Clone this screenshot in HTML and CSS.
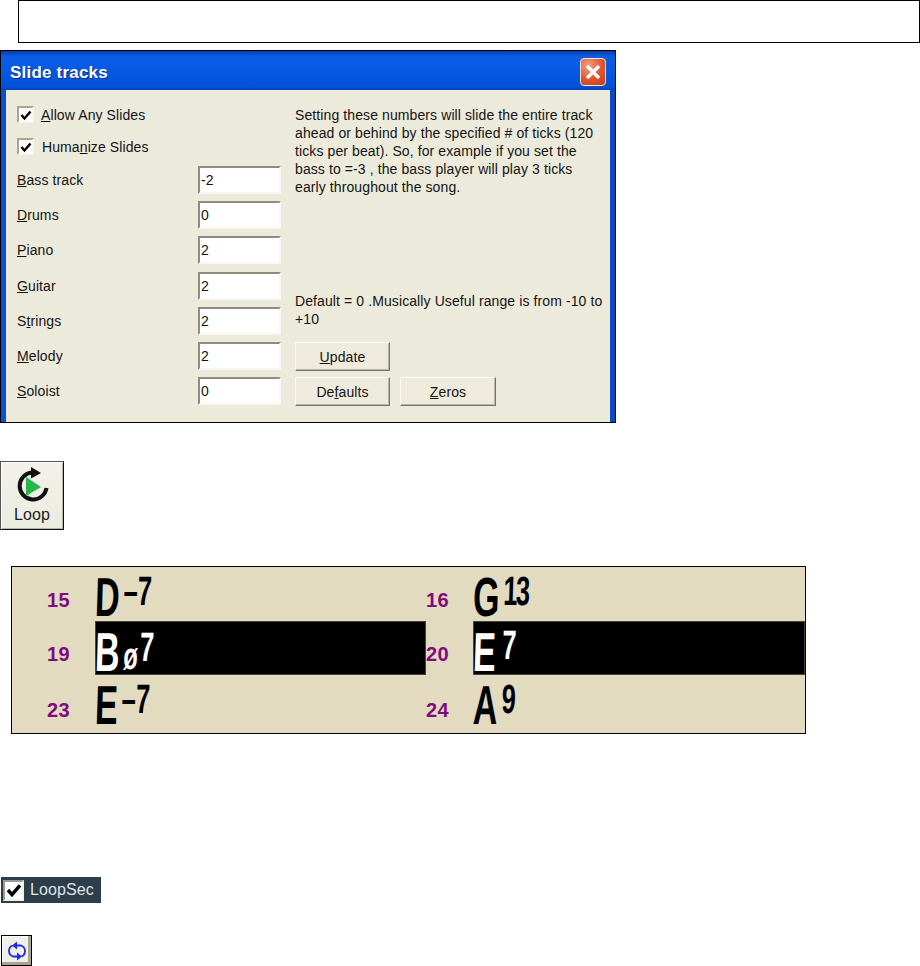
FILE: index.html
```html
<!DOCTYPE html>
<html lang="en">
<head>
<meta charset="utf-8">
<title>Slide tracks</title>
<link rel="stylesheet" href="styles.css">
</head>
<body>
<div class="note-box"></div>

<section class="dialog">
  <header class="titlebar">
    <span class="title">Slide tracks</span>
    <span class="close"><svg width="20" height="20" viewBox="0 0 20 20"><path d="M4 4L16 16M16 4L4 16" stroke="#fff" stroke-width="3.4" fill="none"/></svg></span>
  </header>
  <div class="dialog-body">
    <div class="form">
      <div class="check-row"><span class="check"><svg width="12" height="12" viewBox="0 0 12 12"><path d="M1.5 6L4.5 9.5L10.5 2.5" stroke="#000" stroke-width="2.4" fill="none"/></svg></span><span><u>A</u>llow Any Slides</span></div>
      <div class="check-row second"><span class="check"><svg width="12" height="12" viewBox="0 0 12 12"><path d="M1.5 6L4.5 9.5L10.5 2.5" stroke="#000" stroke-width="2.4" fill="none"/></svg></span><span class="shifted">Huma<u>n</u>ize Slides</span></div>
      <div class="fields">
        <label class="field"><span><u>B</u>ass track</span><input class="num" value="-2"></label>
        <label class="field"><span><u>D</u>rums</span><input class="num" value="0"></label>
        <label class="field"><span><u>P</u>iano</span><input class="num" value="2"></label>
        <label class="field"><span><u>G</u>uitar</span><input class="num" value="2"></label>
        <label class="field"><span>S<u>t</u>rings</span><input class="num" value="2"></label>
        <label class="field"><span><u>M</u>elody</span><input class="num" value="2"></label>
        <label class="field"><span><u>S</u>oloist</span><input class="num" value="0"></label>
      </div>
    </div>
    <div class="side">
      <p>Setting these numbers will slide the entire track ahead or behind by the specified # of ticks (120 ticks per beat). So, for example if you set the bass to =-3 , the bass player will play 3 ticks early throughout the song.</p>
      <p class="range">Default = 0 .Musically Useful range is from -10 to +10</p>
      <div class="btn-row"><span class="btn"><u>U</u>pdate</span></div>
      <div class="btn-row"><span class="btn">De<u>f</u>aults</span><span class="btn"><u>Z</u>eros</span></div>
    </div>
  </div>
</section>

<div class="loop-btn">
  <svg width="38" height="38" viewBox="0 0 38 38"><path d="M19 5.500A13.500 13.500 0 1 0 33.500 21" fill="none" stroke="#111" stroke-width="4"/><path d="M18 0L28 6L18 11.500Z" fill="#111"/><path d="M13 10L28 20L13 29Z" fill="#22b84a"/></svg>
  <span>Loop</span>
</div>

<div class="chart">
  <span class="bar-no">15</span><div class="cell"><span class="chord"><span class="root">D</span><span class="ext">–7</span></span></div>
  <span class="bar-no">16</span><div class="cell"><span class="chord"><span class="root">G</span><span class="ext tight">13</span></span></div>
  <span class="bar-no">19</span><div class="cell hot"><span class="chord"><span class="root">B</span><span class="low">ø</span><span class="ext close-up">7</span></span></div>
  <span class="bar-no">20</span><div class="cell hot"><span class="chord"><span class="root">E</span><span class="ext wide">7</span></span></div>
  <span class="bar-no">23</span><div class="cell"><span class="chord"><span class="root">E</span><span class="ext">–7</span></span></div>
  <span class="bar-no">24</span><div class="cell"><span class="chord"><span class="root">A</span><span class="ext">9</span></span></div>
</div>

<div class="loopsec">
  <span class="sec-check"><svg width="16" height="16" viewBox="0 0 12 12"><path d="M1.500 6L4.500 9.500L10.500 2.500" stroke="#000" stroke-width="2.600" fill="none"/></svg></span>
  <span>LoopSec</span>
</div>

<div class="mini-btn">
  <svg width="22" height="22" viewBox="0 0 22 22"><path d="M8 5.500H15Q19 7 19 11T15.500 16.500" fill="none" stroke="#1a2cf0" stroke-width="1.800"/><path d="M14 16.500H7Q3 15 3 11T6.500 5.500" fill="none" stroke="#1a2cf0" stroke-width="1.800"/><path d="M11 1.500V9.500L6 5.500Z M11 12.500V20.500L16 16.500Z" fill="#1a2cf0"/></svg>
</div>
</body>
</html>
```

FILE: styles.css
```css
html, body {
  margin: 0;
  padding: 0;
  background: #fff;
  height: 966px;
  overflow: hidden;
}
body {
  font-family: "Liberation Sans", Arial, sans-serif;
  font-size: 14px;
  letter-spacing: 0.1px;
  color: #141414;
}
.note-box {
  box-sizing: border-box;
  width: 902px;
  height: 43px;
  margin-left: 18px;
  border: 1px solid #000;
}
.dialog {
  box-sizing: border-box;
  width: 616px;
  height: 373px;
  margin: 7px 0 0 0;
  border: 1px solid #000;
  background: #eceadb;
  display: flex;
  flex-direction: column;
}
.titlebar {
  flex: none;
  height: 39px;
  display: flex;
  align-items: center;
  justify-content: space-between;
  padding: 0 9px 0 9px;
  background: linear-gradient(#0a3aa8, #0c5ce4 14%, #0a5ce6 30%, #0455dc 70%, #0452d8 90%, #0040c0);
}
.title {
  color: #fff;
  font-weight: 700;
  font-size: 17px;
  letter-spacing: 0.2px;
  margin-top: 5px;
  text-shadow: 1px 1px 0 #0a2f8c;
}
.close {
  box-sizing: border-box;
  width: 26px;
  height: 28px;
  margin-top: 3px;
  display: flex;
  align-items: center;
  justify-content: center;
  border: 1px solid #f2e6e0;
  border-radius: 4px;
  background: radial-gradient(circle at 30% 25%, #f0a080, #e0552c 55%, #c23a18);
}
.dialog-body {
  flex: 1;
  display: flex;
  padding: 16px 0 0 11px;
  border-left: 5px solid #0a50d8;
  border-right: 5px solid #0a48c8;
  background: #eceadb;
}
.form {
  width: 278px;
  flex: none;
}
.check-row {
  display: flex;
  align-items: center;
  height: 17px;
  gap: 7px;
}
.check-row.second {
  margin-top: 15px;
}
.shifted {
  margin-left: 1px;
}
.check {
  box-sizing: border-box;
  width: 17px;
  height: 17px;
  display: flex;
  align-items: center;
  justify-content: center;
  background: #fff;
  border: 2px solid;
  border-color: #a8a596 #f6f5ee #f6f5ee #a8a596;
}
.fields {
  margin-top: 11px;
  display: flex;
  flex-direction: column;
  gap: 7.2px;
}
.field {
  display: flex;
  align-items: center;
  height: 28px;
}
.field > span {
  width: 181px;
  flex: none;
}
.num {
  box-sizing: border-box;
  width: 83px;
  height: 28px;
  padding: 0 0 0 1px;
  margin: 0;
  font: inherit;
  color: #141414;
  background: #fff;
  border: 2px solid;
  border-color: #8f8c7e #f8f7f1 #f8f7f1 #8f8c7e;
  border-radius: 0;
  outline: none;
}
.side {
  width: 310px;
  flex: none;
  height: 300px;
  display: flex;
  flex-direction: column;
}
.side p {
  margin: 0;
  line-height: 18px;
}
.side .range {
  margin-top: auto;
}
.btn-row {
  display: flex;
  gap: 10px;
  margin-top: 6px;
}
.range + .btn-row {
  margin-top: 14px;
}
.btn {
  box-sizing: border-box;
  width: 95px;
  height: 29px;
  display: flex;
  align-items: center;
  justify-content: center;
  background: #eeebdc;
  border: 1px solid;
  border-color: #fbfaf4 #77756a #77756a #fbfaf4;
  box-shadow: inset -1px -1px 0 #b8b5a6;
}
.btn + .btn {
  width: 96px;
}
.loop-btn {
  box-sizing: border-box;
  width: 64px;
  height: 69px;
  margin-top: 38px;
  display: flex;
  flex-direction: column;
  align-items: center;
  background: linear-gradient(#f3f2ea, #ecebe0);
  border: 1px solid #111;
  border-color: #555 #111 #111 #555;
  padding-top: 5px;
  box-shadow: inset 1px 1px 0 #fff, inset -1px -1px 0 #b5b3a6;
}
.loop-btn svg {
  display: block;
}
.loop-btn span {
  font-size: 16px;
  line-height: 18px;
  margin-top: 1px;
  color: #1c1c1c;
}
.chart {
  box-sizing: border-box;
  width: 795px;
  height: 168px;
  margin: 36px 0 0 11px;
  display: grid;
  grid-template-columns: 83px 331px 47px 1fr;
  grid-template-rows: 54px 54px 58px;
  background: #e2dbc0;
  border: 1px solid #000;
}
.bar-no {
  align-self: center;
  font-size: 20px;
  font-weight: 700;
  letter-spacing: 0.5px;
  color: #800a80;
  padding-left: 35px;
  padding-top: 12px;
  line-height: 20px;
}
.bar-no:nth-of-type(even) {
  padding-left: 0;
}
.cell {
  min-width: 0;
  padding-top: 3px;
  color: #000;
}
.cell.hot {
  padding-top: 4px;
  background: #000;
  color: #fff;
  box-shadow: inset 0 0 0 1px #4a4636;
}
.chord {
  display: inline-flex;
  align-items: flex-start;
  font-weight: 700;
  letter-spacing: 0;
  transform: scaleX(0.62) skewX(-3deg);
  transform-origin: left top;
  margin-left: 1px;
}
.root {
  font-size: 55px;
  line-height: 55px;
}
.ext {
  font-size: 41px;
  line-height: 41px;
  margin-left: 6px;
  margin-top: 1px;
}
.ext.tight {
  letter-spacing: -3px;
  margin-left: 6px;
}
.ext.wide {
  margin-left: 10px;
  margin-top: 0;
}
.ext.close-up {
  margin-left: 3px;
  margin-top: 2px;
}
.low {
  font-size: 38px;
  line-height: 38px;
  margin-left: 6px;
  margin-top: 12px;
}
.loopsec {
  box-sizing: border-box;
  width: 100px;
  height: 26px;
  margin: 143px 0 0 1px;
  padding-left: 2px;
  display: flex;
  align-items: center;
  gap: 6px;
  background: #2b3e4a;
  color: #dfe5e8;
  font-size: 16px;
}
.sec-check {
  box-sizing: border-box;
  width: 21px;
  height: 21px;
  display: flex;
  align-items: center;
  justify-content: center;
  background: #fff;
  border: 2px solid;
  border-color: #9c9a8c #f2f1e8 #f2f1e8 #9c9a8c;
}
.mini-btn {
  box-sizing: border-box;
  width: 31px;
  height: 31px;
  margin: 32px 0 0 1px;
  display: flex;
  align-items: center;
  justify-content: center;
  background: #f1f0e6;
  border: 1px solid #000;
  box-shadow: inset -3px -3px 0 #a8a594, inset 1px 1px 0 #fff;
}
```
